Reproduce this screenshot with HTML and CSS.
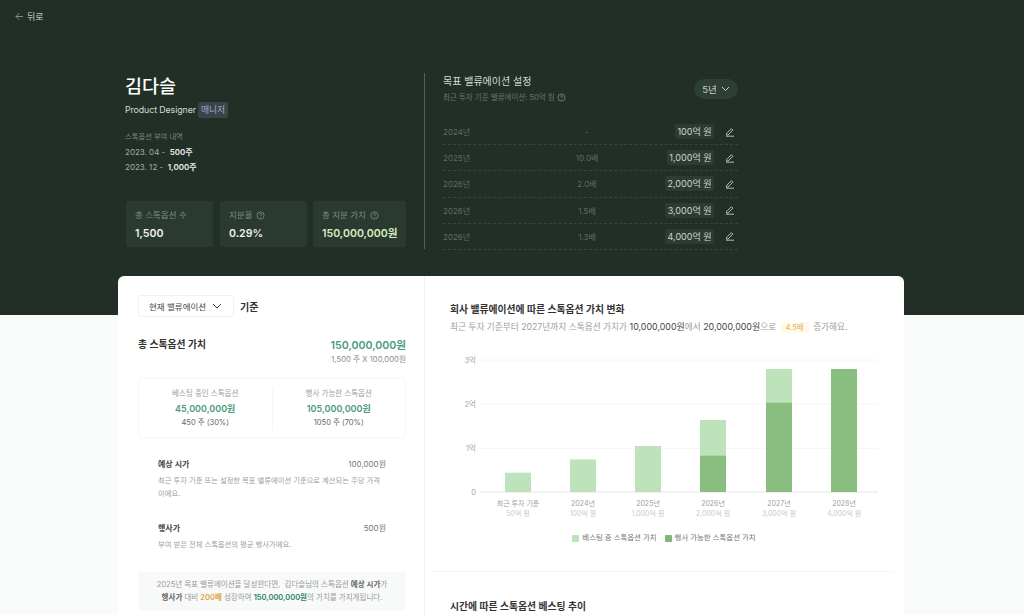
FILE: index.html
```html
<!DOCTYPE html>
<html lang="ko">
<head>
  <meta charset="utf-8">
  <title>스톡옵션</title>
  <link rel="stylesheet" href="styles.css">
</head>
<body>
  <header class="top">
    <a class="back">
      <svg width="9" height="9" viewBox="0 0 9 9" fill="none" stroke="#8b968f" stroke-width="0.9"><path d="M8 4.5H1M4.2 1.2 1 4.5l3.2 3.3"/></svg>
      뒤로
    </a>
    <div class="top-inner">
      <section class="profile">
        <h1>김다슬</h1>
        <p class="role">Product Designer <span class="badge">매니저</span></p>
        <p class="grant-label">스톡옵션 부여 내역</p>
        <p class="grant">2023. 04 - &nbsp;<b>500주</b></p>
        <p class="grant">2023. 12 - &nbsp;<b>1,000주</b></p>
        <div class="stats">
          <div class="stat stat-a">
            <span class="stat-label">총 스톡옵션 수</span>
            <strong>1,500</strong>
          </div>
          <div class="stat stat-b">
            <span class="stat-label">지분율 <svg class="help" viewBox="0 0 10 10"><circle cx="5" cy="5" r="4"/><path d="M3.8 4c0-1.5 2.5-1.5 2.5 0 0 .9-1.3.9-1.3 1.8M5 7v.5"/></svg></span>
            <strong>0.29%</strong>
          </div>
          <div class="stat stat-c">
            <span class="stat-label">총 지분 가치 <svg class="help" viewBox="0 0 10 10"><circle cx="5" cy="5" r="4"/><path d="M3.8 4c0-1.5 2.5-1.5 2.5 0 0 .9-1.3.9-1.3 1.8M5 7v.5"/></svg></span>
            <strong class="lime">150,000,000원</strong>
          </div>
        </div>
      </section>
      <section class="target">
        <div class="target-head">
          <div>
            <h2>목표 밸류에이션 설정</h2>
            <p>최근 투자 기준 밸류에이션: 50억 원 <svg class="help" viewBox="0 0 10 10"><circle cx="5" cy="5" r="4"/><path d="M3.8 4c0-1.5 2.5-1.5 2.5 0 0 .9-1.3.9-1.3 1.8M5 7v.5"/></svg></p>
          </div>
          <button class="years">5년
            <svg width="9" height="6" viewBox="0 0 9 6" fill="none" stroke="#c9d0cb" stroke-width="1"><path d="M1 1l3.5 3.5L8 1"/></svg>
          </button>
        </div>
        <div class="row"><span>2024년</span><span class="mult">-</span><span class="chip">100억 원</span><svg class="edit" viewBox="0 0 10 10"><path d="M1.5 6.6 6.4 1.7l1.5 1.5L3 8H1.5zM1 9.2h8"/></svg></div>
        <div class="row"><span>2025년</span><span class="mult">10.0배</span><span class="chip">1,000억 원</span><svg class="edit" viewBox="0 0 10 10"><path d="M1.5 6.6 6.4 1.7l1.5 1.5L3 8H1.5zM1 9.2h8"/></svg></div>
        <div class="row"><span>2026년</span><span class="mult">2.0배</span><span class="chip">2,000억 원</span><svg class="edit" viewBox="0 0 10 10"><path d="M1.5 6.6 6.4 1.7l1.5 1.5L3 8H1.5zM1 9.2h8"/></svg></div>
        <div class="row"><span>2026년</span><span class="mult">1.5배</span><span class="chip">3,000억 원</span><svg class="edit" viewBox="0 0 10 10"><path d="M1.5 6.6 6.4 1.7l1.5 1.5L3 8H1.5zM1 9.2h8"/></svg></div>
        <div class="row"><span>2026년</span><span class="mult">1.3배</span><span class="chip">4,000억 원</span><svg class="edit" viewBox="0 0 10 10"><path d="M1.5 6.6 6.4 1.7l1.5 1.5L3 8H1.5zM1 9.2h8"/></svg></div>
      </section>
    </div>
  </header>

  <main class="card">
    <section class="left">
      <div class="basis">
        <button class="select">현재 밸류에이션
          <svg width="10" height="6" viewBox="0 0 10 6" fill="none" stroke="#444" stroke-width="1"><path d="M1 1l4 4 4-4"/></svg>
        </button>
        <b>기준</b>
      </div>
      <div class="total">
        <h3>총 스톡옵션 가치</h3>
        <div class="total-value">
          <strong>150,000,000원</strong>
          <span>1,500 주 X 100,000원</span>
        </div>
      </div>
      <div class="split">
        <div class="split-cell">
          <span class="split-label">베스팅 중인 스톡옵션</span>
          <strong>45,000,000원</strong>
          <span class="split-share">450 주 (30%)</span>
        </div>
        <div class="split-cell">
          <span class="split-label">행사 가능한 스톡옵션</span>
          <strong>105,000,000원</strong>
          <span class="split-share">1050 주 (70%)</span>
        </div>
      </div>
      <div class="term term-first">
        <div class="term-head"><b>예상 시가</b><span>100,000원</span></div>
        <p>최근 투자 기준 또는 설정한 목표 밸류에이션 기준으로 계산되는 주당 가격<br>이에요.</p>
      </div>
      <div class="term term-second">
        <div class="term-head"><b>행사가</b><span>500원</span></div>
        <p>부여 받은 전체 스톡옵션의 평균 행사가에요.</p>
      </div>
      <div class="note">
        2025년 목표 밸류에이션을 달성한다면, &nbsp;김다슬님의 스톡옵션 <b>예상 시가</b>가<br>
        <b>행사가</b> 대비 <b class="gold">200배</b> 성장하여 <b class="green">150,000,000원</b>의 가치를 가지게됩니다.
      </div>
    </section>

    <section class="right">
      <h3>회사 밸류에이션에 따른 스톡옵션 가치 변화</h3>
      <p class="summary">최근 투자 기준부터 2027년까지 스톡옵션 가치가 <em>10,000,000원</em>에서 <em>20,000,000원</em>으로 <span class="times">4.5배</span> 증가해요.</p>
      <svg class="chart" width="454" height="182" viewBox="0 0 454 182">
        <g class="grid">
          <path d="M30 15H428M30 59H428M30 103.500H428"/>
        </g>
        <path class="axis" d="M30 147H428"/>
        <g class="y-labels">
          <text x="26" y="18">3억</text>
          <text x="26" y="62">2억</text>
          <text x="26" y="106">1억</text>
          <text x="26" y="150">0</text>
        </g>
        <g class="light">
          <rect x="55" y="127.700" width="26" height="19.300"/>
          <rect x="120" y="114.500" width="26" height="32.500"/>
          <rect x="185" y="101" width="26" height="46"/>
          <rect x="250" y="75" width="26" height="36"/>
          <rect x="316" y="24" width="26" height="34"/>
        </g>
        <g class="dark">
          <rect x="250" y="110.700" width="26" height="36.300"/>
          <rect x="316" y="57.700" width="26" height="89.300"/>
          <rect x="381" y="24" width="26" height="123"/>
        </g>
        <g class="x-labels">
          <text x="68" y="161">최근 투자 기준</text>
          <text x="133" y="161">2024년</text>
          <text x="198" y="161">2025년</text>
          <text x="263" y="161">2026년</text>
          <text x="329" y="161">2027년</text>
          <text x="394" y="161">2028년</text>
        </g>
        <g class="x-sub">
          <text x="68" y="171">50억 원</text>
          <text x="133" y="171">100억 원</text>
          <text x="198" y="171">1,000억 원</text>
          <text x="263" y="171">2,000억 원</text>
          <text x="329" y="171">3,000억 원</text>
          <text x="394" y="171">4,000억 원</text>
        </g>
      </svg>
      <div class="legend">
        <span><i class="swatch swatch-light"></i>베스팅 중 스톡옵션 가치</span>
        <span><i class="swatch swatch-dark"></i>행사 가능한 스톡옵션 가치</span>
      </div>
      <hr class="rule">
      <h3>시간에 따른 스톡옵션 베스팅 추이</h3>
    </section>
  </main>
</body>
</html>
```

FILE: styles.css
```css
* {
  box-sizing: border-box;
}

body {
  margin: 0;
  height: 615px;
  overflow: hidden;
  background-color: #f9fafa;
  font-family: Inter, "Noto Sans CJK KR", sans-serif;
  color: #222;
}

h1, h2, h3, p {
  margin: 0;
  font-weight: normal;
}

button {
  font-family: inherit;
  border: none;
  padding: 0;
}

.top {
  height: 315px;
  padding-top: 10px;
  background-color: #212f27;
  color: #fff;
}

.back {
  display: flex;
  align-items: center;
  gap: 3px;
  margin-left: 15px;
  height: 13px;
  font-size: 9px;
  color: #c3cbc6;
}

.top-inner {
  display: flex;
  margin-top: 50px;
}

.profile {
  width: 282px;
  margin-left: 125px;
  padding-top: 1px;
}

.profile h1 {
  font-size: 18.500px;
  line-height: 24px;
  font-weight: 500;
}

.role {
  display: flex;
  align-items: center;
  gap: 2px;
  margin-top: 4px;
  font-size: 8.800px;
  letter-spacing: -0.01em;
  line-height: 16px;
  color: #d5dbd7;
}

.badge {
  padding: 0 3px;
  border-radius: 2px;
  background-color: #38434a;
  color: #a4aac9;
}

.grant-label {
  margin-top: 13px;
  font-size: 7.300px;
  line-height: 12px;
  color: #78857d;
}

.grant {
  margin-top: 3px;
  font-size: 8px;
  line-height: 12px;
  color: #a5aea8;
}

.grant b {
  color: #e9ecea;
  font-weight: 600;
}

.stats {
  display: flex;
  gap: 7px;
  margin-top: 28px;
  margin-left: 1px;
}

.stat {
  display: flex;
  flex-direction: column;
  gap: 4px;
  height: 46px;
  padding: 8px 8px 0 9px;
  border-radius: 3px;
  background-color: #2b3a31;
}

.stat-a {
  width: 87px;
}

.stat-b {
  width: 87px;
}

.stat-c {
  width: 93px;
  margin-left: -1px;
}

.stat-label {
  display: flex;
  align-items: center;
  gap: 4px;
  font-size: 8.500px;
  line-height: 13px;
  color: #7d8a82;
}

.stat strong {
  font-size: 10.600px;
  line-height: 15px;
  font-weight: 600;
  white-space: nowrap;
  color: #eef1ef;
}

.stat strong.lime {
  color: #d6eec0;
}

.help {
  width: 9px;
  height: 9px;
  fill: none;
  stroke: #8a968f;
  stroke-width: 0.8;
  vertical-align: -1.500px;
}

.target {
  width: 314px;
  height: 176px;
  margin-left: 17px;
  padding-left: 18px;
  border-left: 1px solid #55625a;
}

.target-head {
  display: flex;
  justify-content: space-between;
  width: 295px;
  height: 46px;
}

.target-head h2 {
  margin-top: 1px;
  font-size: 10px;
  line-height: 14px;
  color: #d5dbd7;
}

.target-head p {
  margin-top: 4px;
  font-size: 7.500px;
  line-height: 12px;
  color: #68766d;
}

.years {
  display: flex;
  align-items: center;
  justify-content: center;
  gap: 4px;
  width: 44px;
  height: 20px;
  margin-top: 6px;
  border-radius: 10px;
  background-color: #2f3e35;
  color: #c9d0cb;
  font-size: 9.500px;
}

.row {
  display: grid;
  grid-template-columns: 96px 96px 79px 24px;
  align-items: center;
  width: 295px;
  height: 26.200px;
  border-bottom: 1px dashed #37453c;
  font-size: 8px;
  color: #5e6c63;
}

.mult {
  text-align: center;
}

.chip {
  justify-self: end;
  padding: 0 2.500px;
  border-radius: 2px;
  background-color: #2d3b33;
  color: #cfd6d1;
  font-size: 9px;
  line-height: 15px;
  white-space: nowrap;
}

.edit {
  justify-self: end;
  width: 10px;
  height: 10px;
  margin-right: 3px;
  fill: none;
  stroke: #c5ccc7;
  stroke-width: 0.9;
}

.card {
  display: flex;
  width: 786px;
  height: 339px;
  margin-top: -39px;
  margin-left: 118px;
  border-radius: 6px 6px 0 0;
  background-color: #fff;
}

.left {
  flex: none;
  width: 307px;
  padding: 19px 18px 0 20px;
  border-right: 1px solid #f2f3f3;
}

.basis {
  display: flex;
  align-items: center;
  gap: 6px;
  font-size: 10px;
}

.basis b {
  font-weight: 600;
  color: #333;
}

.select {
  display: flex;
  align-items: center;
  justify-content: space-between;
  width: 96px;
  height: 22px;
  padding: 0 11px 0 10px;
  border: 1px solid #f0f1f1;
  border-radius: 3px;
  background-color: #fff;
  color: #444;
  font-size: 8.500px;
}

.total {
  display: flex;
  justify-content: space-between;
  margin-top: 21px;
}

.total h3 {
  font-size: 9.800px;
  line-height: 14px;
  font-weight: 600;
  color: #333;
}

.total-value {
  display: flex;
  flex-direction: column;
  align-items: flex-end;
  gap: 1px;
}

.total-value strong {
  font-size: 10.600px;
  line-height: 15px;
  font-weight: 600;
  color: #4c9a7d;
}

.total-value span {
  font-size: 7.700px;
  line-height: 12px;
  color: #8e8e8e;
}

.split {
  display: flex;
  height: 60px;
  margin-top: 12px;
  padding: 9px 0 0;
  border: 1px solid #f7f7f7;
  border-radius: 3px;
}

.split-cell {
  display: flex;
  flex: 1;
  flex-direction: column;
  align-items: center;
  gap: 1.500px;
  height: 42px;
}

.split-cell + .split-cell {
  border-left: 1px solid #f5f5f5;
}

.split-label {
  font-size: 7.500px;
  line-height: 12px;
  color: #a0a0a0;
}

.split-cell strong {
  font-size: 9px;
  line-height: 14px;
  font-weight: 600;
  color: #4c9a7d;
}

.split-share {
  font-size: 7.500px;
  line-height: 12px;
  color: #666;
}

.term {
  margin: 0 20px;
}

.term-first {
  padding-top: 20px;
}

.term-second {
  padding-top: 22px;
}

.term-head {
  display: flex;
  justify-content: space-between;
  font-size: 8px;
  line-height: 12px;
  color: #777;
}

.term-head b {
  font-weight: 600;
  color: #444;
}

.term p {
  margin-top: 4px;
  font-size: 7.300px;
  line-height: 13px;
  color: #a0a0a0;
}

.note {
  margin-top: 21px;
  height: 39px;
  padding: 6px 0;
  border-radius: 3px;
  background-color: #f8f9f9;
  text-align: center;
  font-size: 7.500px;
  line-height: 13px;
  color: #9a9a9a;
}

.note b {
  font-weight: 600;
  color: #666;
}

.note b.gold {
  color: #dfa63f;
}

.note b.green {
  color: #2f8463;
}

.right {
  flex: 1;
  min-width: 0;
  padding: 27px 0 0 25px;
}

.right h3 {
  font-size: 9.800px;
  line-height: 14px;
  font-weight: 600;
  color: #333;
}

.summary {
  margin-top: 3px;
  font-size: 8.700px;
  line-height: 14px;
  white-space: nowrap;
  color: #a0a0a0;
}

.summary em {
  font-style: normal;
  font-size: 8.900px;
  color: #444;
}

.times {
  margin: 0 2px;
  padding: 1px 5px;
  border-radius: 2px;
  background-color: #fffaea;
  color: #dfb060;
  font-size: 7.500px;
}

.chart {
  display: block;
  margin-top: 10px;
}

.grid path {
  fill: none;
  stroke: #f6f6f6;
  stroke-width: 1;
}

.axis {
  fill: none;
  stroke: #e4e4e4;
  stroke-width: 1;
}

.y-labels text {
  font-size: 7.500px;
  fill: #a5a5a5;
  text-anchor: end;
}

.light rect {
  fill: #bee2b9;
}

.dark rect {
  fill: #8abd80;
}

.x-labels text {
  font-size: 7px;
  fill: #a0a0a0;
  text-anchor: middle;
}

.x-sub text {
  font-size: 7px;
  fill: #cacaca;
  text-anchor: middle;
}

.legend {
  display: flex;
  justify-content: center;
  gap: 8px;
  margin-top: 5px;
  padding-right: 26px;
  font-size: 7.400px;
  line-height: 12px;
  color: #777;
}

.legend span {
  display: flex;
  align-items: center;
  gap: 3px;
}

.swatch {
  width: 7px;
  height: 7px;
  border-radius: 1px;
}

.swatch-light {
  background-color: #bee2b9;
}

.swatch-dark {
  background-color: #7fb874;
}

.rule {
  height: 1px;
  margin: 27px 10px 28px -20px;
  border: none;
  background-color: #f6f6f6;
}
```
